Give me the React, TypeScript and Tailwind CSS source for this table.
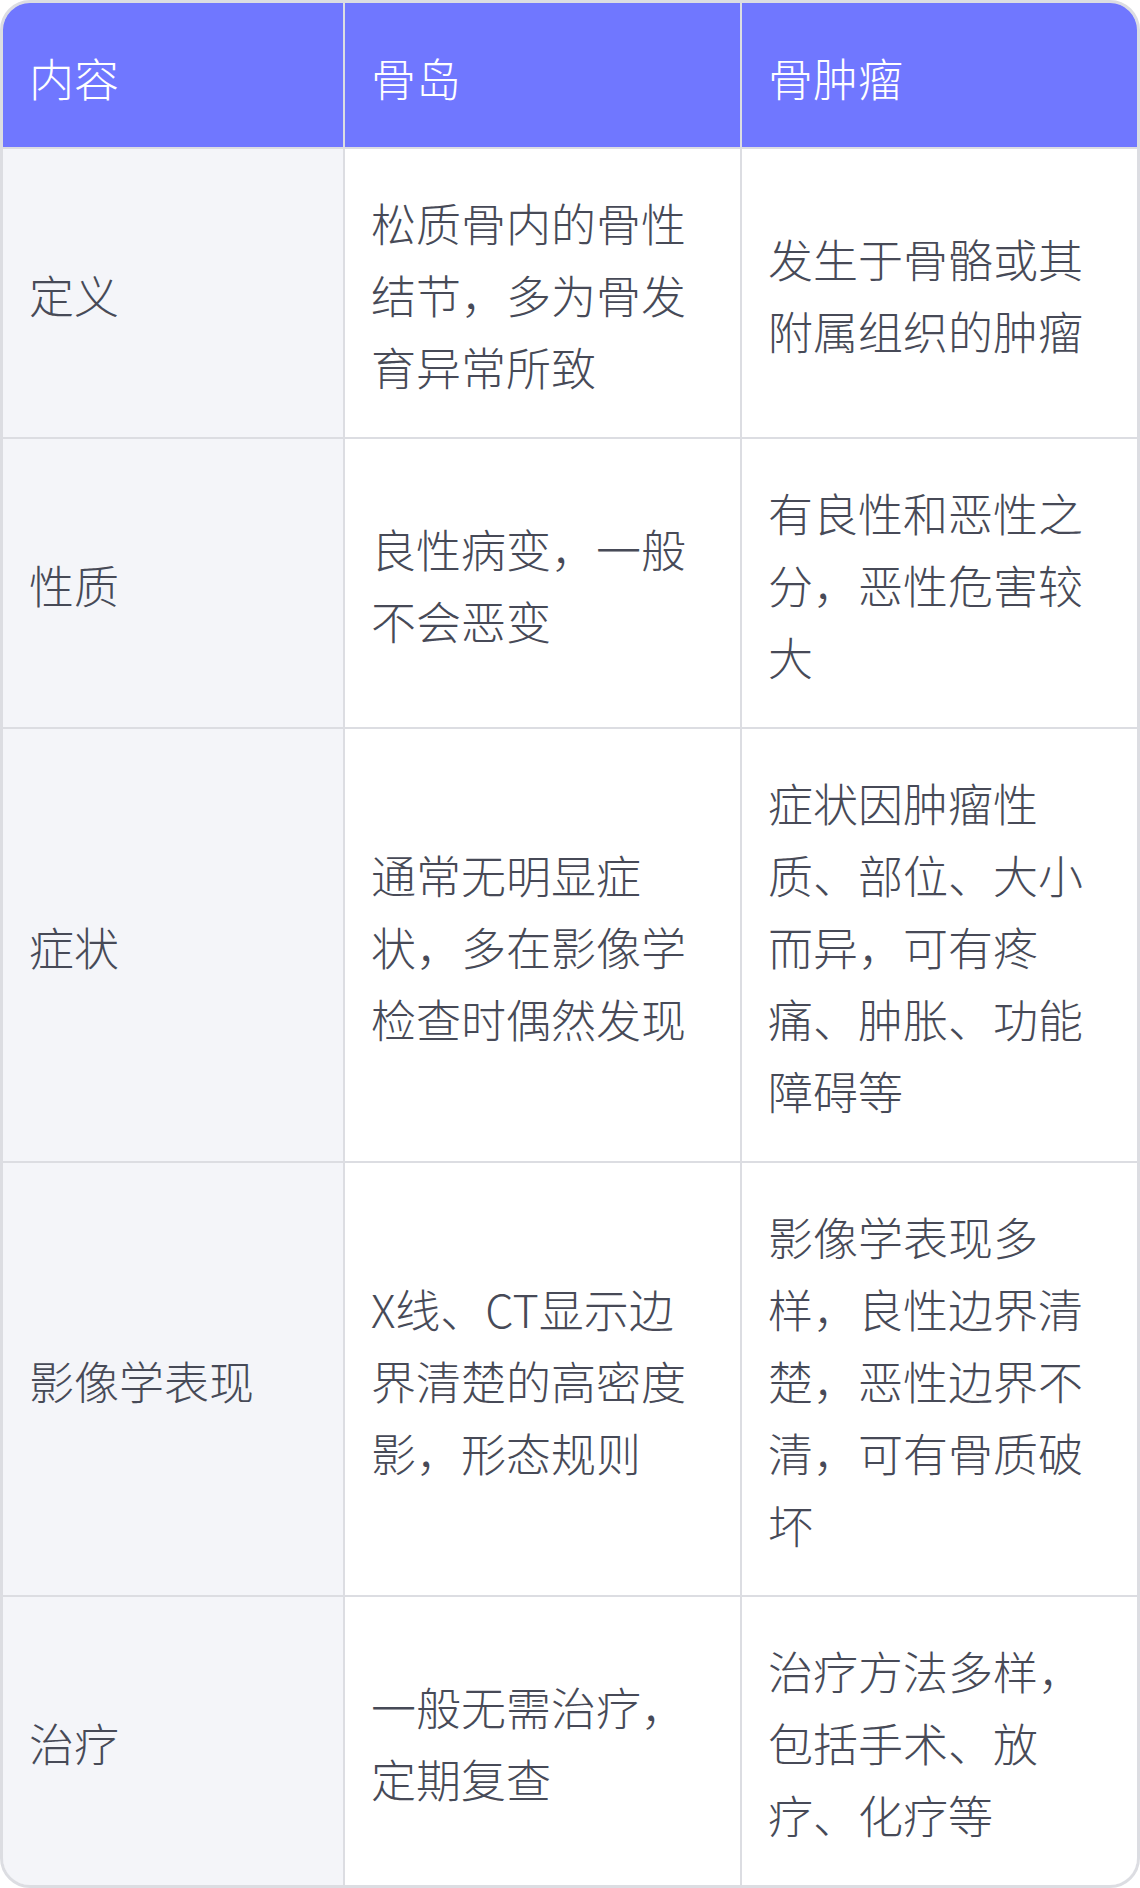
import React from 'react';

interface Row {
    label: string;
    island: string;
    tumor: string;
}

const rows: Row[] = [
    {label: "定义", island: "松质骨内的骨性结节，多为骨发育异常所致", tumor: "发生于骨骼或其附属组织的肿瘤"},
    {label: "性质", island: "良性病变，一般不会恶变", tumor: "有良性和恶性之分，恶性危害较大"},
    {label: "症状", island: "通常无明显症状，多在影像学检查时偶然发现", tumor: "症状因肿瘤性质、部位、大小而异，可有疼痛、肿胀、功能障碍等"},
    {label: "影像学表现", island: "X线、CT显示边界清楚的高密度影，形态规则", tumor: "影像学表现多样，良性边界清楚，恶性边界不清，可有骨质破坏"},
    {label: "治疗", island: "一般无需治疗，定期复查", tumor: "治疗方法多样，包括手术、放疗、化疗等"},
];

const headers = ["内容", "骨岛", "骨肿瘤"];

export default function App() {
    return (
        <div className="w-[1140px] bg-white font-['Noto_Sans_CJK_SC',sans-serif] font-extralight">
            <div className="overflow-hidden rounded-[30px] border-[3px] border-[#dcdde2]">
                <div className="grid grid-cols-[340px_395px_395px] gap-[2px] bg-[#dcdde2]">
                    {headers.map((h) => (
                        <div
                            key={h}
                            className="flex items-center bg-[#7077ff] px-[26px] pt-[39px] pb-[33px] text-[45px] leading-[72px] text-white">
                            {h}
                        </div>
                    ))}
                    {rows.map((row) => (
                        <React.Fragment key={row.label}>
                            <div className="flex items-center bg-[#f4f5f9] px-[26px] pt-[38px] pb-[34px] text-[45px] leading-[72px] text-[#474a57]">
                                {row.label}
                            </div>
                            <div className="flex items-center bg-white px-[26px] pt-[38px] pb-[34px] text-[45px] leading-[72px] text-[#474a57]">
                                {row.island}
                            </div>
                            <div className="flex items-center bg-white px-[26px] pt-[38px] pb-[34px] text-[45px] leading-[72px] text-[#474a57]">
                                {row.tumor}
                            </div>
                        </React.Fragment>
                    ))}
                </div>
            </div>
        </div>
    );
}
